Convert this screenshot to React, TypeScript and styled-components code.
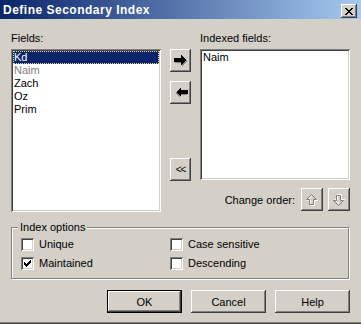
import styled, { createGlobalStyle } from "styled-components";

const GlobalStyle = createGlobalStyle`
  html, body {
    margin: 0;
    padding: 0;
    background: #d4d0c8;
  }
  * {
    box-sizing: border-box;
  }
`;

const raised = `
  box-shadow: inset -1px -1px #404040, inset 1px 1px #ffffff,
    inset -2px -2px #808080, inset 2px 2px #d4d0c8;
`;

const sunken = `
  box-shadow: inset 1px 1px #808080, inset -1px -1px #ffffff,
    inset 2px 2px #404040, inset -2px -2px #d4d0c8;
`;

const Dialog = styled.div`
  width: 361px;
  height: 324px;
  display: flex;
  flex-direction: column;
  background: #d4d0c8;
  border-bottom: 1px solid #404040;
  box-shadow: inset 0 -1px 0 #808080;
  color: #000;
  font-family: "Liberation Sans", Arial, sans-serif;
  font-size: 11px;
`;

const TitleBar = styled.div`
  height: 19px;
  padding: 4px 4px 0 3px;
  display: flex;
  justify-content: space-between;
  align-items: flex-start;
  background: linear-gradient(to right, #0a246a, #a6caf0);
`;

const Caption = styled.span`
  color: #fff;
  font-weight: bold;
  font-size: 12px;
  letter-spacing: 0.5px;
  line-height: 13px;
  white-space: nowrap;
`;

const CloseButton = styled.div`
  width: 16px;
  height: 14px;
  display: flex;
  align-items: center;
  justify-content: center;
  background: #d4d0c8;
  ${raised}
`;

const Body = styled.div`
  flex: 1;
  padding: 13px 11px 0;
  display: flex;
  flex-direction: column;
`;

const Panels = styled.div`
  display: flex;
  gap: 9px;
  align-items: flex-start;
`;

const Column = styled.div<{ $width: number }>`
  width: ${(p) => p.$width}px;
  display: flex;
  flex-direction: column;
  gap: 4px;
`;

const Label = styled.div`
  height: 13px;
  line-height: 13px;
  white-space: nowrap;
`;

const ListBox = styled.div<{ $height: number }>`
  height: ${(p) => p.$height}px;
  padding: 2px;
  background: #fff;
  ${sunken}
`;

const ListItem = styled.div<{ $selected?: boolean; $muted?: boolean }>`
  height: 13px;
  line-height: 13px;
  padding-left: 1px;
  white-space: nowrap;
  color: ${(p) => (p.$selected ? "#fff" : p.$muted ? "#808080" : "#000")};
  background: ${(p) => (p.$selected ? "#0a246a" : "transparent")};
  outline: ${(p) => (p.$selected ? "1px dotted #f5db95" : "none")};
  outline-offset: -1px;
`;

const ArrowStack = styled.div`
  width: 21px;
  padding-top: 17px;
  display: flex;
  flex-direction: column;
`;

const SideButton = styled.div<{ $top: number; $height: number }>`
  margin-top: ${(p) => p.$top}px;
  width: 21px;
  height: ${(p) => p.$height}px;
  display: flex;
  align-items: center;
  justify-content: center;
  background: #d4d0c8;
  font-size: 10px;
  letter-spacing: -1px;
  ${raised}
`;

const OrderRow = styled.div`
  margin-top: 4px;
  display: flex;
  justify-content: flex-end;
  align-items: center;
  gap: 5px;
`;

const OrderLabel = styled.span`
  margin-right: 1px;
  white-space: nowrap;
`;

const OrderButton = styled.div`
  width: 22px;
  height: 23px;
  display: flex;
  align-items: center;
  justify-content: center;
  background: #d4d0c8;
  ${raised}
`;

const GroupBox = styled.fieldset`
  margin: 9px 1px 0 0;
  padding: 4px 9px 8px;
  border: 1px solid #808080;
  box-shadow: inset 1px 1px 0 #fff, 1px 1px 0 #fff;
  display: grid;
  grid-template-columns: 149px 1fr;
  row-gap: 6px;
  min-width: 0;
`;

const Legend = styled.legend`
  margin-left: -3px;
  padding: 0 2px;
  line-height: 13px;
  background: #d4d0c8;
`;

const Option = styled.label`
  height: 13px;
  display: flex;
  align-items: center;
  gap: 5px;
  line-height: 13px;
  white-space: nowrap;
`;

const CheckBox = styled.span`
  width: 13px;
  height: 13px;
  flex: none;
  display: flex;
  align-items: center;
  justify-content: center;
  background: #fff;
  ${sunken}
`;

const ButtonRow = styled.div`
  margin-top: 11px;
  display: flex;
  justify-content: flex-end;
  gap: 9px;
`;

const PushButton = styled.div<{ $default?: boolean }>`
  width: 75px;
  height: 23px;
  display: flex;
  align-items: center;
  justify-content: center;
  background: #d4d0c8;
  border: ${(p) => (p.$default ? "1px solid #000" : "none")};
  ${raised}
`;

function CloseGlyph() {
  return (
    <svg width="8" height="7" viewBox="0 0 8 7" shapeRendering="crispEdges">
      <path d="M0 0h2v1h-2zM6 0h2v1h-2zM1 1h2v1h-2zM5 1h2v1h-2zM2 2h4v1h-4zM3 3h2v1h-2zM2 4h4v1h-4zM1 5h2v1h-2zM5 5h2v1h-2zM0 6h2v1h-2zM6 6h2v1h-2z" fill="#000" />
    </svg>
  );
}

function BlockArrow({ left }: { left?: boolean }) {
  return (
    <svg width="14" height="11" viewBox="0 0 14 11" shapeRendering="crispEdges"
      style={left ? { transform: "scaleX(-1)" } : undefined}>
      <polygon points="1,4 8,4 8,1 13,6 8,11 8,8 1,8" fill="#808080" />
      <polygon points="0,3 7,3 7,0 12,5 7,10 7,7 0,7" fill="#000" />
    </svg>
  );
}

function OutlineArrow({ down }: { down?: boolean }) {
  const d = "M6.5 1.5 L11.5 6.5 L8.5 6.5 L8.5 11.5 L4.5 11.5 L4.5 6.5 L1.5 6.5 Z";
  return (
    <svg width="14" height="14" viewBox="0 0 14 14"
      style={down ? { transform: "scaleY(-1)" } : undefined}>
      <path d={d} transform="translate(1 1)" fill="none" stroke="#fff" />
      <path d={d} fill="none" stroke="#808080" />
    </svg>
  );
}

function Tick() {
  return (
    <svg width="7" height="7" viewBox="0 0 7 7" shapeRendering="crispEdges">
      <path d="M6 0h1v3h-1zM5 1h1v3h-1zM4 2h1v3h-1zM0 2h1v3h-1zM1 3h1v3h-1zM3 3h1v3h-1zM2 4h1v3h-1z" fill="#000" />
    </svg>
  );
}

const fields = [
  { name: "Kd", selected: true },
  { name: "Naim", muted: true },
  { name: "Zach" },
  { name: "Oz" },
  { name: "Prim" },
];

const options = [
  { label: "Unique", checked: false },
  { label: "Case sensitive", checked: false },
  { label: "Maintained", checked: true },
  { label: "Descending", checked: false },
];

export default function App() {
  return (
    <>
      <GlobalStyle />
      <Dialog>
        <TitleBar>
          <Caption>Define Secondary Index</Caption>
          <CloseButton>
            <CloseGlyph />
          </CloseButton>
        </TitleBar>
        <Body>
          <Panels>
            <Column $width={150}>
              <Label>Fields:</Label>
              <ListBox $height={163}>
                {fields.map((f) => (
                  <ListItem key={f.name} $selected={f.selected} $muted={f.muted}>
                    {f.name}
                  </ListItem>
                ))}
              </ListBox>
            </Column>
            <ArrowStack>
              <SideButton $top={0} $height={23}>
                <BlockArrow />
              </SideButton>
              <SideButton $top={9} $height={23}>
                <BlockArrow left />
              </SideButton>
              <SideButton $top={54} $height={23}>
                &lt;&lt;
              </SideButton>
            </ArrowStack>
            <Column $width={150}>
              <Label>Indexed fields:</Label>
              <ListBox $height={131}>
                <ListItem>Naim</ListItem>
              </ListBox>
              <OrderRow>
                <OrderLabel>Change order:</OrderLabel>
                <OrderButton>
                  <OutlineArrow />
                </OrderButton>
                <OrderButton>
                  <OutlineArrow down />
                </OrderButton>
              </OrderRow>
            </Column>
          </Panels>
          <GroupBox>
            <Legend>Index options</Legend>
            {options.map((o) => (
              <Option key={o.label}>
                <CheckBox>{o.checked && <Tick />}</CheckBox>
                {o.label}
              </Option>
            ))}
          </GroupBox>
          <ButtonRow>
            <PushButton $default>OK</PushButton>
            <PushButton>Cancel</PushButton>
            <PushButton>Help</PushButton>
          </ButtonRow>
        </Body>
      </Dialog>
    </>
  );
}
